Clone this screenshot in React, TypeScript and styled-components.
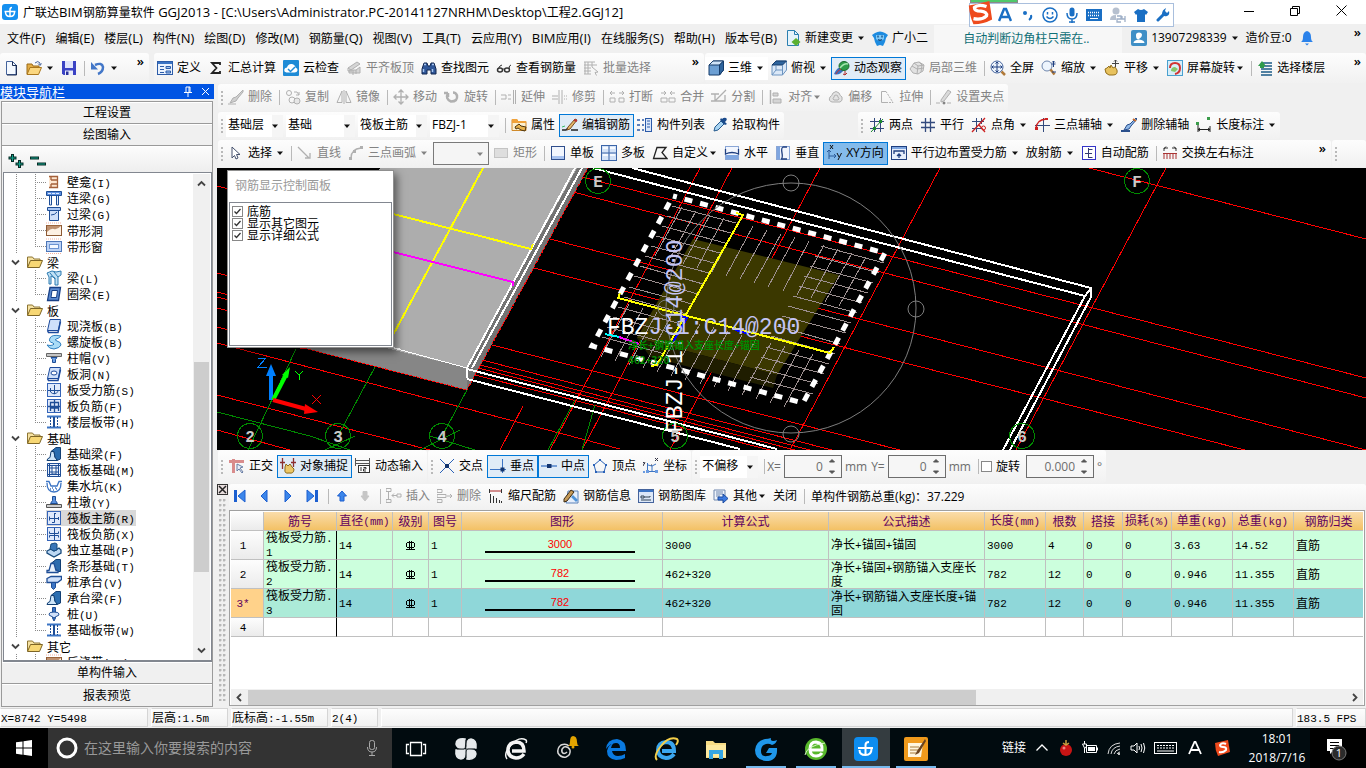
import React, { ReactNode } from "react";
import styled, { createGlobalStyle, css } from "styled-components";

const UI = `"Open Sans", "Noto Sans CJK SC", sans-serif`;
const SONG = `"Noto Sans CJK SC", sans-serif`;

const Global = createGlobalStyle`
  * { box-sizing: border-box; }
  html, body { margin: 0; padding: 0; }
  body { background: #f0f0f0; color: #000; font: 12px/16px ${UI}; overflow: hidden; }
  button, input, select { font: inherit; color: inherit; margin: 0; }
  svg { display: block; flex: none; }
`;

/* ---------- icons ---------- */

const g = "#b0b0b0";
const n = "#1f4e96";

const slab = (
  <>
    <path d="M4 1.500h10.500l-2 11H1.500z" fill="#cfe0fa" stroke="#1c4a9c" />
    <path d="M1.500 12.500l1 2H12l2.500-11" fill="none" stroke="#1c4a9c" strokeWidth="1.500" />
  </>
);
const frame = <rect x="1.500" y="1.500" width="13" height="13" fill="#dfe9fb" stroke="#3564b8" />;
const beam = (
  <>
    <path d="M1 14.500q0-2 3-3l1-6h3l1 6q2 1 2 3z" fill="#cfe6fa" stroke="#123f73" />
    <path d="M5 5.500L10 1.500h4.500V13L11 14.500q0-2-2-3l-1-6z" fill="#2a6db0" stroke="#123f73" />
  </>
);

const icons: Record<string, ReactNode> = {
  logo: (
    <>
      <rect width="16" height="16" rx="3" fill="#1590f0" />
      <path d="M2.500 7.500h11M8 12V5.500Q8 3.500 10 3.500M12.500 8q0 4.500-4.500 4.500T3.500 8" fill="none" stroke="#fff" strokeWidth="1.500" />
    </>
  ),
  new: (
    <>
      <path d="M3.500 1.500h6l3.500 3.500v9.500H3.500z" fill="#f4f9ff" stroke="#44639c" />
      <path d="M9.500 1.500v4H13M13.500 5v10H4" fill="none" stroke="#1d2e55" />
    </>
  ),
  open: (
    <>
      <path d="M1 14V4h5l1 2h6v2" fill="#e3ad45" stroke="#9b6a16" />
      <path d="M1 14.500L4 7.500h11.500l-3 7z" fill="#fbd780" stroke="#a9761d" />
      <path d="M9 3q3-3 5 0v2m-2-1.500l2 2 1.500-2" fill="none" stroke="#44639c" />
    </>
  ),
  save: (
    <>
      <path d="M1 1h14v14H2.500L1 13.500z" fill="#3a42c4" />
      <path d="M4 1h8v7H4z" fill="#dfe3fb" />
      <path d="M4 10.500h8V15H4z" fill="#e9ecfa" />
      <path d="M5 11.500h2.500V15H5z" fill="#26309b" />
    </>
  ),
  undo: (
    <>
      <path d="M5 5Q12 2 13 7q0 5-5 7" fill="none" stroke="#4377c8" strokeWidth="2.500" />
      <path d="M1 2v7.500h7z" fill="#4377c8" />
    </>
  ),
  define: (
    <>
      <rect x="0.500" y="1.500" width="15" height="13" fill="#eaf2fd" stroke="#2c5ca8" />
      <path d="M1 2h14v2H1z" fill="#3b74c4" />
      <path d="M3 6.500h4M3 9.500h4M3 12.500h4M9 6.500h4.500v2H9zM9 11h4.500v2H9z" fill="#9dc0ee" stroke="#2c5ca8" />
    </>
  ),
  sum: <path d="M12 5V3H4l4.500 5L4 13h8v-2" fill="none" stroke="#222" strokeWidth="1.800" />,
  cloud: (
    <>
      <rect width="16" height="16" rx="1" fill="#1e8bd6" />
      <path d="M3.500 12.500Q0.500 12 1.500 9 2 7.500 4 7.500 5 3.500 9 4q3 .500 3.500 3.500 2.500 1 2 3-.500 2-3 2z" fill="#fff" />
      <path d="M5 9l2.500 2.500L12 7" stroke="#1e8bd6" strokeWidth="1.500" fill="none" />
    </>
  ),
  align: (
    <>
      <path d="M2 8l9-6 3 2-9 6zM3 13h11V7l-4 3H3z" fill="#d5d5d5" stroke={g} />
      <path d="M2 8v3h4M7 10v5M10 10v4" stroke={g} fill="none" />
    </>
  ),
  find: (
    <>
      <path d="M1 9l2-6h3l1 3h2l1-3h3l2 6v5h-5v-4H6v4H1z" fill="#2f5698" stroke="#12264f" />
      <path d="M3 4.500h2M11 4.500h2M2.500 9v3M11.500 9v3" stroke="#a9c8f2" strokeWidth="1.500" />
    </>
  ),
  glasses: (
    <>
      <ellipse cx="4" cy="10" rx="2.500" ry="2" fill="none" stroke="#333" strokeWidth="1.500" />
      <ellipse cx="11" cy="10" rx="2.500" ry="2" fill="none" stroke="#333" strokeWidth="1.500" />
      <path d="M2 9q2-4 4-4M6.500 9.500q1-1 2 0M13 9q0-4 2-4" fill="none" stroke="#333" />
    </>
  ),
  batch: <path d="M1 2h11M1 5h13M1 8h7M1 11h7M1 14h7M2 2v12M5 2v12M9 2v5M9 7l6 5-3 .500 1.500 3" fill="none" stroke={g} />,
  cube: (
    <>
      <path d="M1 5l4-4h10.500v9l-4 5H1z" fill="#6c9fd3" stroke="#173d6b" />
      <path d="M1 5l4-4h10.500l-4 4z" fill="#cfe3f7" stroke="#173d6b" />
      <path d="M11.500 5V15l4-5V1z" fill="#2e649d" stroke="#173d6b" />
    </>
  ),
  top: (
    <>
      <path d="M1 5l4-4h10.500v9l-4 5H1z" fill="#dbe8f7" stroke="#6c94c0" />
      <path d="M1 5l4-4h10.500l-4 4z" fill="#2e649d" stroke="#173d6b" />
      <path d="M11.500 5V15M5 5v5h6M5 10l-4 5" fill="none" stroke="#6c94c0" />
    </>
  ),
  orbit: (
    <>
      <path d="M0 14Q5 16 10 10L6 7Q2 9 0 14z" fill="#3a6fc0" />
      <ellipse cx="10" cy="6" rx="5" ry="4.500" fill="#2e9c4a" stroke="#1c6b30" />
      <path d="M6 8q4-5 8-4" stroke="#a5e6b0" fill="none" strokeWidth="1.500" />
      <path d="M2 14q1-3 5-5" stroke="#c23838" fill="none" />
      <path d="M11 11v4l-2-1m2 1l2-2" stroke="#b02a2a" fill="none" />
    </>
  ),
  local: (
    <>
      <path d="M1 9l4-6 5-1 5 3-1 6-5 3-5-1z" fill="#e2e2e2" stroke={g} />
      <path d="M5 3l4 3-1 8M9 6l6-1M3 6l5 3 7-1M10 2l3 3-1 7" fill="none" stroke={g} />
    </>
  ),
  full: (
    <>
      <circle cx="7" cy="7" r="6" fill="#eef5fd" stroke="#44639c" />
      <path d="M7 2v10M2 7h10M5.500 3.500L7 2l1.500 1.500M5.500 10.500L7 12l1.500-1.500M3.500 5.500L2 7l1.500 1.500M10.500 5.500L12 7l-1.500 1.500" stroke="#1f3f80" fill="none" />
      <path d="M11.500 11.500l3.500 3.500" stroke="#b07a3a" strokeWidth="2.500" />
    </>
  ),
  zoom: (
    <>
      <circle cx="6" cy="6" r="5" fill="#eef5fd" stroke="#6f87ae" />
      <path d="M9.500 9.500l4 5" stroke="#b07a3a" strokeWidth="2.500" />
      <path d="M12.500 1v6M11 2.500L12.500 1 14 2.500M10.500 4h4M11 12h4" stroke="#1f3f80" fill="none" />
    </>
  ),
  pan: (
    <>
      <path d="M3 8l2-2 1 2 1-3 2 3 2-1 2 3q1 5-4 5H5Q1 14 1 9z" fill="#e8c25e" stroke="#94701d" />
      <path d="M11.500 0v7M8 3.500h7M10 1.500L11.500 0 13 1.500" stroke="#444" fill="none" />
    </>
  ),
  spin: (
    <>
      <rect x="0.500" y="0.500" width="15" height="15" fill="#d7eef9" stroke="#49a0cf" />
      <path d="M3 8q0-5 5-5t5 5-5 6" fill="none" stroke="#d23333" strokeWidth="2" />
      <path d="M4 11q0-4 4-4l3 2-3 3z" fill="#86c66a" />
    </>
  ),
  floors: (
    <>
      <path d="M6 3h9M6 6h9M4 9h11M4 12h11M4 15h11" stroke="#1b5b86" strokeWidth="1.500" />
      <path d="M1 6l4-5 4 5H7v2H3V6z" fill="#2f9b4b" />
    </>
  ),
  brush: (
    <>
      <path d="M15 1L8 8l-3 1-3 5 6-2 2-3 5-6z" fill="#cfcfcf" stroke={g} />
      <path d="M0 15h8" stroke={g} />
    </>
  ),
  copy: (
    <>
      <circle cx="4" cy="4" r="2.500" fill="none" stroke={g} />
      <circle cx="7" cy="11" r="3" fill="none" stroke={g} />
      <circle cx="12" cy="12" r="3" fill="#e6e6e6" stroke={g} />
      <path d="M9 3h3l2 3m0-3v3h-3" fill="none" stroke={g} />
    </>
  ),
  mirror: <path d="M6 2v11.500H1zM10 2v11.500h5zM8 1v14" fill="none" stroke={g} />,
  move: <path d="M8 1v14M1 8h14M5.500 3.500L8 1l2.500 2.500M5.500 12.500L8 15l2.500-2.500M3.500 5.500L1 8l2.500 2.500M12.500 5.500L15 8l-2.500 2.500" fill="none" stroke={g} strokeWidth="1.300" />,
  rotate: <path d="M4 4q-3 6 3 8.500 7 0 6-6-1-3-4-3M4 4v4M4 4H0" fill="none" stroke={g} strokeWidth="2.500" />,
  extend: <path d="M0 6h5M0 10h5M5 6v4M7 6h3M7 10h3M12.500 1v14M14.500 1v14" fill="none" stroke={g} />,
  trim: <path d="M0 7h6M0 10h6M7 1v14M10 1v14M12 7h1M14 7h1M12 10h1M14 10h1" fill="none" stroke={g} />,
  split: <path d="M1 4h5M3 2L1 4l2 2M15 4h-5M13 2l2 2-2 2M1 9h5v4H1zM10 9h5v4h-5z" fill="none" stroke={g} />,
  join: <path d="M6 4H1M4 2l2 2-2 2M10 4h5M12 2l-2 2 2 2M1 9h6v4H1zM9 9h6v4H9z" fill="none" stroke={g} />,
  cut: <path d="M0 5h8M0 12h14V6M15 1L7 9l-3 3M4 5v7" fill="none" stroke={g} strokeWidth="1.300" />,
  justify: (
    <>
      <path d="M2.500 1v14" stroke={g} strokeWidth="1.500" />
      <path d="M5 4h5v3H5zM5 10h8v4H5z" fill="#d5d5d5" stroke={g} />
    </>
  ),
  offset: (
    <>
      <path d="M4 13Q0 12 2 8q2-1 3-4 3-3 6 0 1 3 3 4 1 4-2 5z" fill="#e3e3e3" stroke={g} />
      <path d="M6 11q-2-1 0-3 0-2 2-2t2 2q2 2 0 3z" fill="none" stroke={g} />
    </>
  ),
  stretch: (
    <>
      <path d="M7 2.500H2.500v11H7" fill="none" stroke={g} />
      <path d="M7 2.500l7 11H7" fill="none" stroke={g} strokeDasharray="2 1" />
    </>
  ),
  grip: (
    <>
      <path d="M5 11L12 1l3 2-7 9-3 1z" fill="#dadada" stroke={g} />
      <path d="M0 14h4M11 14h4M7 13h2v2H7z" stroke={g} />
    </>
  ),
  prop: (
    <>
      <path d="M1 13.500v-11h5l1 2h8v9z" fill="#fdf0cf" stroke="#d08a2a" />
      <path d="M1 2h5l1 2h8v2H1z" fill="#f0a23a" />
      <path d="M4 10l4-3 2 2 5 1-1 4-4-1-3-2-2 1z" fill="#e9b34d" stroke="#4b330c" />
    </>
  ),
  edit: (
    <>
      <path d="M0 13h4l2-2M9 13h7" stroke="#222" fill="none" strokeWidth="1.500" />
      <path d="M6 10l7-8 2 1-7 9-3 1z" fill="#e3b76a" stroke="#7b4c1e" />
      <path d="M12 3l3 1" stroke="#b83434" strokeWidth="2" />
      <path d="M0 10l3-1" stroke="#3b6" />
    </>
  ),
  list: (
    <>
      <path d="M0 3h3M0 8h3M0 13h3M5 3h2M5 8h2M5 13h2" stroke="#2b5aa8" strokeWidth="1.500" />
      <rect x="8.500" y="1.500" width="6" height="13" fill="#dbe7fa" stroke="#2b5aa8" />
      <path d="M10 4h3M10 7h3M10 10h3" stroke="#2b5aa8" />
    </>
  ),
  pick: (
    <>
      <path d="M2 14l1-4 6-6 3 3-6 6z" fill="#a8d4f2" stroke="#255a8e" />
      <path d="M8 3l5 5 2-1-2-2q3-3 1-4t-4 1L9 1z" fill="#1b4b8c" />
    </>
  ),
  twoPoint: (
    <>
      <path d="M5.500 1v14M11.500 1v14M1 4.500h14M1 11.500h14" stroke="#334a7d" />
      <path d="M2 15L14 2" stroke="#1d8a2f" />
      <path d="M4 10h3v3H4zM10 3h3v3h-3z" fill="#1d8a2f" />
    </>
  ),
  parallel: <path d="M5.500 1v14M10.500 1v14M1 5.500h14M1 10.500h14" stroke="#334a7d" strokeWidth="1.300" />,
  pointAngle: (
    <>
      <path d="M5.500 1v14M1 4.500h12M1 11.500h10M10.500 1v6" stroke="#334a7d" />
      <path d="M1 15L14 1M8 8l6 7" stroke="#c22" strokeWidth="1.300" />
      <circle cx="12.500" cy="11" r="2" fill="none" stroke="#c22" />
    </>
  ),
  arcAxis: (
    <>
      <path d="M9.500 1v14M1 8.500h15" stroke="#334a7d" />
      <path d="M2 12q0-9 10-10" stroke="#c22" fill="none" strokeWidth="1.300" />
      <path d="M1 10h3v3H1zM11 1h3v2h-3z" fill="#c22" />
    </>
  ),
  delAxis: (
    <>
      <path d="M15 1L9 7l-3 1-3 5 5-1 2-3 6-7z" fill="#8fb8e8" stroke="#2a4f8c" />
      <path d="M12 2l3 2" stroke="#c86a2a" strokeWidth="2" />
      <path d="M0 14h9" stroke="#2a4f8c" strokeWidth="2" />
    </>
  ),
  dim: (
    <>
      <path d="M2 7v8M14 9v6M2 12.500h12M4 11l-2 1.500L4 14M12 11l2 1.500-2 1.500" fill="none" stroke="#222" />
      <path d="M0 5h3v3H0zM11 0h3v3h-3z" fill="#3a9c4a" />
    </>
  ),
  cursor: <path d="M4 2v11l2.500-2.500L8 14l2-1-1.500-3.500H12z" fill="#fff" stroke="#44506c" />,
  line: <path d="M1 2l11 11M13 8v5H8" fill="none" stroke={g} strokeWidth="1.300" />,
  arc: (
    <>
      <path d="M3 13Q3 4 13 3" fill="none" stroke={g} strokeWidth="1.300" />
      <path d="M1 12h3v3H1zM5 5h3v3H5zM12 1h3v3h-3z" fill={g} />
    </>
  ),
  rect: <rect x="1.500" y="3.500" width="13" height="9" fill="#dedede" stroke="#c4c4c4" />,
  board: (
    <>
      <rect x="1.500" y="1.500" width="13" height="13" fill="#f2f6fe" stroke="#2f4e8d" />
      <path d="M2 11h12v3H2z" fill="#a9c3f0" />
    </>
  ),
  boards: (
    <>
      <rect x="0.500" y="0.500" width="15" height="15" fill="#d4e3f8" stroke="#3b65a8" />
      <path d="M8 1v14M1 8h14" stroke="#3b65a8" />
      <path d="M2 2h5v2H2zM9 2h5v2H9zM2 9h5v2H2zM9 9h5v2H9z" fill="#f6faff" />
    </>
  ),
  custom: <path d="M5 2.500h9l-4 5 5 6H1.500z" fill="none" stroke="#222" strokeWidth="1.300" />,
  horiz: (
    <>
      <rect x="1.500" y="1.500" width="13" height="13" fill="#f2f6fe" stroke="#8aa6d6" />
      <path d="M2 10h12v4H2z" fill="#7fa6e0" />
      <path d="M1.500 4v5q6.500-3 13 0V4" fill="none" stroke="#1f3f80" strokeWidth="1.300" />
    </>
  ),
  vert: (
    <>
      <rect x="1.500" y="1.500" width="13" height="13" fill="#f2f6fe" stroke="#8aa6d6" />
      <path d="M2 2h3v12H2z" fill="#7fa6e0" />
      <path d="M12 2H8q-2 1-1 6t-1 6h6" fill="none" stroke="#1f3f80" strokeWidth="1.300" />
    </>
  ),
  xy: (
    <>
      <path d="M3 5v6h7M1 7l2-2 2 2M8 9l2 2-2 2M3 11v3" fill="none" stroke="#2a5a98" />
      <path d="M4 0l3 4M7 0L4 4M11 8l2 4M15.500 8L12 15" stroke="#111" />
    </>
  ),
  para: (
    <>
      <rect x="0.500" y="1.500" width="15" height="13" fill="#e6eefb" stroke="#1f3f80" />
      <path d="M1 2h14v2H1z" fill="#7fa6e0" />
      <path d="M3 9V6h10v3M8 13V9M6 11l2-2 2 2" fill="none" stroke="#1f3f80" strokeWidth="1.300" />
    </>
  ),
  auto: (
    <>
      <rect x="1.500" y="1.500" width="13" height="13" fill="#fff" stroke="#3434c8" />
      <path d="M7.500 3v10M7.500 4.500h4M4 8.500h7M7.500 12.500h4" fill="none" stroke="#333a70" />
    </>
  ),
  swap: (
    <>
      <path d="M2 6V3h4M10 3h4v3M4 1.500L2 4M12 1.500L14 4" fill="none" stroke="#333" />
      <path d="M2 14V9M5 14V9M8 14V9M11 14V9M14 14V9M1 8.500h14" stroke="#a33" />
    </>
  ),
  ortho: (
    <>
      <path d="M0 3.500h15M4.500 1v14" stroke="#d98c8c" strokeWidth="3" />
      <path d="M8 6v7l2-2 3 4 1-1-3-4 3-1z" fill="#e8eef8" stroke="#6a7ea4" />
    </>
  ),
  snap: (
    <>
      <path d="M2.500 0v11M13.500 0v9M0 4.500h5M11 4.500h5" stroke="#8a2f2f" strokeWidth="1.300" />
      <path d="M5 9l1-3 2 2 2-2 2 3 2 2q0 5-5 4-5 1-4-4z" fill="#ebc766" stroke="#8d6b1e" />
    </>
  ),
  dyn: (
    <>
      <path d="M0.500 2.500h14M0.500 5.500h14M0.500 0v8M14.500 0v8" stroke="#555" fill="none" />
      <rect x="3.500" y="7.500" width="11" height="7" fill="#fff" stroke="#333" />
      <path d="M6 9v4M8.500 9.500H11v1.500H8.500V13H11" stroke="#333" fill="none" />
    </>
  ),
  cross: (
    <>
      <path d="M1 1l14 14M15 1L1 15" stroke="#2a62b8" />
      <path d="M6 6h4v4H6z" fill="#12356f" />
    </>
  ),
  perp: (
    <>
      <path d="M0 11.500h16M12.500 1v14" stroke="#3b74c4" />
      <path d="M10.500 9.500h4v4h-4z" fill="#12356f" />
    </>
  ),
  mid: (
    <>
      <path d="M0 8h16" stroke="#3b74c4" strokeWidth="1.300" />
      <path d="M6 6h4.500v4H6z" fill="#12356f" />
    </>
  ),
  vertex: (
    <>
      <path d="M8 2l6 5-2 7H4L2 7z" fill="none" stroke="#2a62b8" />
      <path d="M7 1h2v2H7zM13 6h2v2h-2zM1 6h2v2H1zM3 13h2v2H3zM11 13h2v2h-2z" fill="#2a62b8" />
    </>
  ),
  coord: (
    <>
      <path d="M4.500 5v8.500H14M5 7l4 1v5M9 8l4-2" fill="none" stroke="#3b74c4" />
      <path d="M0 4l2 2M2 4L0 8M12 0l3 3M15 0l-3 3M4 13h1M8 7h1M13 13h1" fill="none" stroke="#334" />
      <path d="M0 13h2v2H0zM3 12h3v3H3zM12 12h3v3h-3z" fill="#6a9be0" />
    </>
  ),
  first: (
    <>
      <path d="M2 2h3v12H2z" fill="#1c5fd0" />
      <path d="M13 2v12L6 8z" fill="#3c86ea" stroke="#1c5fd0" />
    </>
  ),
  prev: <path d="M11 2v12L5 8z" fill="#3c86ea" stroke="#1c5fd0" />,
  next: <path d="M5 2v12l6-6z" fill="#3c86ea" stroke="#1c5fd0" />,
  last: (
    <>
      <path d="M11 2h3v12h-3z" fill="#1c5fd0" />
      <path d="M3 2v12l7-6z" fill="#3c86ea" stroke="#1c5fd0" />
    </>
  ),
  up: <path d="M8 3l4.500 5H10v5H6V8H3.500z" fill="#3c86ea" stroke="#1c5fd0" />,
  down: <path d="M8 13l4-5h-2V3.500H6V8H4z" fill="#c6c6c6" stroke="#c6c6c6" />,
  insert: <path d="M0 0.500h5v3H0zM0 11.500h5v3H0zM2.500 4v7M6 7.500h5M8 5.500l-2 2 2 2M11 6h4v3h-4z" fill="none" stroke={g} />,
  remove: <path d="M0 1.500h5v3H0zM0 11.500h5v3H0zM0 6.500h9v3H0zM10 8h5M13 6l2 2-2 2" fill="none" stroke={g} />,
  scale: (
    <>
      <path d="M2 3h11" stroke="#a22" />
      <path d="M1.500 1v4M13.500 1v4M2.500 6v9M5.500 8v7M8.500 10v5M11.500 12v3M13.500 13v2" stroke="#333" />
    </>
  ),
  info: (
    <>
      <path d="M5 3h10v12H3z" fill="#e5eefb" stroke="#5b82b8" />
      <path d="M8 9l5 5 2-2-5-5z" fill="#4f93d8" />
      <path d="M1 11l7-9 3 2-7 9-3 1z" fill="#c59a58" stroke="#3c2a12" />
    </>
  ),
  gallery: (
    <>
      <rect x="0.500" y="1.500" width="15" height="13" fill="#dbe7f8" stroke="#44639c" />
      <path d="M1 2h14v2H1z" fill="#3b74c4" />
      <path d="M3 8h3v2H3zM6 9h6v-1M3 12h10" fill="none" stroke="#345" />
    </>
  ),
  other: (
    <>
      <path d="M1 2h11v10H1z" fill="#eef3fb" stroke="#6f87ae" />
      <path d="M3 4h7M3 6h7M3 8h4" stroke="#6f87ae" />
      <path d="M5 9h5V6l5 4.500-5 4.500v-3H5z" fill="#3c7ae0" stroke="#1b4aa0" />
    </>
  ),
  change: (
    <>
      <path d="M2.500 0.500h7l4 4v11h-11z" fill="#e5f3fb" stroke="#2a7fb0" />
      <path d="M9.500 0.500v4h4" fill="none" stroke="#2a7fb0" />
      <path d="M11 8l4.500 4L11 16l-4.500-4z" fill="#5bb030" />
    </>
  ),
  robot: (
    <>
      <path d="M0 5l3-2q5-3 10 0l3 2-2 3-1 4-2 4-3-1-3 1-2-4-1-4z" fill="#1d8be0" />
      <path d="M4 5h8v4q-4 4-8 0z" fill="#7cc8f8" />
      <path d="M6 5.500v2M10 5.500v2M6 9.500q2 1.500 4 0" fill="none" stroke="#134a80" strokeWidth="1.300" />
    </>
  ),
  user: (
    <>
      <rect width="16" height="16" rx="2" fill="#3f8fc6" />
      <path d="M5 5q0-2.500 3-2.500T11 5t-3 4T5 5zM2.500 13q0-3 5.500-3.500 5.500.500 5.500 3.500z" fill="#fff" />
    </>
  ),
  bell: (
    <>
      <path d="M8 1q4 1 4 6 0 4 2 5H2q2-1 2-5 0-5 4-6z" fill="#2b82ea" />
      <path d="M6 13.500h4l-2 2z" fill="#2b82ea" />
    </>
  ),
  folder: (
    <>
      <path d="M0.500 13V3h5l1.500 2h6v3" fill="#f6e2a2" stroke="#8c7433" />
      <path d="M0.500 13.500l3-7h12l-3 7z" fill="#f7d774" stroke="#7d6526" />
    </>
  ),
  t_niche: (
    <>
      <path d="M3 2.500h8.500v11H3M5 6h6M5 10h6M5 2.500V6M5 10v3.500" fill="#fde6d0" stroke="#a4603a" strokeWidth="1.300" />
    </>
  ),
  t_link: (
    <>
      <path d="M0.500 1.500h15v4h-15z" fill="#5b8fe0" stroke={n} />
      <path d="M3.500 6v9h2V6M10.500 6v9h2V6" fill="#e6effd" stroke={n} />
      <path d="M2 3.500h12" stroke="#dfeafe" strokeDasharray="3 1" />
    </>
  ),
  t_lintel: (
    <>
      <path d="M1.500 1.500h13v3h-13z" fill="#a9c6f4" stroke={n} />
      <path d="M3.500 5v9.500h9V5" fill="#cfe0fa" stroke={n} />
      <path d="M5 9q4 0 6-3" fill="none" stroke={n} />
    </>
  ),
  t_hole: (
    <>
      <rect x="0.500" y="3.500" width="15" height="10" fill="#fdf1e4" stroke="#8d5a34" />
      <path d="M1 10q4-4 7-3t7-3v-1H1z" fill="#a2683e" opacity="0.700" />
      <path d="M0 1h16" stroke="#f2b0a0" strokeDasharray="1 1" />
    </>
  ),
  t_window: (
    <>
      <rect x="0.500" y="3.500" width="15" height="10" fill="#bcd3f6" stroke="#4d77b8" />
      <rect x="3.500" y="6.500" width="9" height="4" fill="#f4f9ff" stroke="#6d95d2" />
      <path d="M0 1h16M0 15.500h16" stroke="#f2b0a0" strokeDasharray="1 1" />
    </>
  ),
  t_beam: (
    <>
      <path d="M1 3l5-2 4 1 5-1v4l-3 2v8H9V8L5 6v8H3V7z" fill="#bfe0f5" stroke="#2c7ab0" />
      <path d="M4 3l5 6M8 2l4 5" stroke="#2c7ab0" />
    </>
  ),
  t_ring: (
    <>
      <path d="M4 1.500h10.500l-2 13H1.500z" fill="#5b8ad0" stroke="#173f86" strokeWidth="1.300" />
      <path d="M6 4.500h5.500l-1 7H5z" fill="#fff" stroke="#173f86" />
    </>
  ),
  t_slab: slab,
  t_spiral: <path d="M15 2Q6 0 4 4t3 5q2 1 0 2-3 1-6 0 2 4 7 4 6-1 7-4 0-3-4-4-3-1-1-2 2 0 5-3z" fill="#a9dcf7" stroke="#2f7fc0" />,
  t_cap: (
    <>
      <path d="M0.500 3.500h15v3h-15z" fill="#c4c4c4" stroke="#666" />
      <path d="M5 7.500h6l-1.500 2v3h-3v-3z" fill="#6ea2e6" stroke={n} />
    </>
  ),
  t_slabhole: (
    <>
      {slab}
      <ellipse cx="8" cy="7" rx="3" ry="2" fill="#fff" stroke="#1c4a9c" />
    </>
  ),
  t_force: (
    <>
      {frame}
      <path d="M2 8.500h12M8.500 3v9M4.500 6v4q4 4 8-1" fill="none" stroke={n} />
    </>
  ),
  t_neg: (
    <>
      {frame}
      <path d="M8.500 2v12M4.500 8V4.500h8V8M2 8.500h12M4.500 13v-3h8v3" fill="none" stroke={n} strokeWidth="1.300" />
    </>
  ),
  t_strip: (
    <>
      <path d="M1 2.500h14M1 13.500h14" stroke="#3b74c4" strokeWidth="2" />
      <path d="M4.500 3v10M11.500 3v10" stroke={n} strokeDasharray="2 1" />
      <path d="M8 3v10" stroke={n} strokeWidth="2" />
    </>
  ),
  t_found: beam,
  t_raft: <path d="M1.500 1.500h13v13h-13zM3.500 1v14M12.500 1v14M1 3.500h14M1 12.500h14M6 4v8h4V4M4 6h8M4 10h8" fill="#eaf1fd" stroke={n} />,
  t_pit: <path d="M0 3.500h3l2 4.500h6l2-4.500h3M1 5q0 9 7 9t7-9M4 11h1M7 12h1M10 11h1M6 10h1M9 10h1" fill="none" stroke="#3b74c4" strokeWidth="1.300" />,
  t_pier: (
    <>
      <path d="M4.500 9.500l2-3v-4h3v4l2 3z" fill="#5b93e0" stroke={n} />
      <path d="M0.500 10.500h15v3h-15z" fill="#cfcfcf" stroke="#555" />
    </>
  ),
  t_main: (
    <>
      {frame}
      <path d="M3.500 8.500h9M3.500 6.500v4M12.500 7v3M8 3.500h2M8.500 3.500v9H6" fill="none" stroke={n} />
    </>
  ),
  t_rneg: (
    <>
      {frame}
      <path d="M8.500 2v12M3.500 5.500v2h9v-2M3.500 11.500v-2h9v2" fill="none" stroke={n} />
    </>
  ),
  t_indep: (
    <>
      <path d="M1 9l4-2 3 2 5-3 2 2v3l-7 4-7-4z" fill="#bcd8f4" stroke="#174a7c" strokeWidth="1.300" />
      <path d="M4 7l1-5 4-1 2 1v6L8 9z" fill="#3a76b8" stroke="#174a7c" />
    </>
  ),
  t_stripf: (
    <>
      <path d="M5 5.500l5-4h4.500v12h-3z" fill="#2d6cae" stroke="#123f73" />
      <path d="M1 14.500v-2h2l2-7h3l2 7h2v2z" fill="#e8f1fc" stroke={n} strokeWidth="1.300" />
    </>
  ),
  t_pilecap: (
    <>
      <path d="M1 4.500l4-2h10.500v3l-4 3H1z" fill="#cfe0fa" stroke={n} strokeWidth="1.300" />
      <path d="M5.500 8.500h4v5l-2 2-2-2z" fill="#3b74c4" stroke={n} />
    </>
  ),
  t_pile: (
    <>
      <path d="M6.500 1.500h3v5h-3zM6.500 9v3l1.500 3 1.500-3V9" fill="#3b74c4" stroke={n} />
      <path d="M3 8q0-2 5-2t5 2-2 2l-3 2-3-2q-2 0-2-2z" fill="#cfe0fa" stroke={n} />
    </>
  ),
};

const Icon = ({ name, size = 16 }: { name: string; size?: number }) => (
  <svg width={size} height={size} viewBox="0 0 16 16" aria-hidden>
    {icons[name]}
  </svg>
);

const Caret = ({ color = "#111" }: { color?: string }) => (
  <svg width="8" height="8" viewBox="0 0 8 8" aria-hidden>
    <path d="M1 2.500h6L4 6z" fill={color} />
  </svg>
);

const More = styled.span`
  margin-left: auto;
  align-self: flex-start;
  padding: 2px 5px 0;
  font: 600 13px/12px ${UI};
`;

/* ---------- mixed-width text ---------- */

const Latin = styled.span`
  && { padding: 0; }
  font: 11px/12px "Liberation Mono", monospace;
`;

const WideLatin = styled.span`
  font-size: 13px;
`;

/* splits the half-width characters from the CJK ones and sets them in their own face */
const Mixed = ({ children, wide }: { children: string; wide?: boolean }) => (
  <>
    {children.split(/([\x20-\x7e]+)/).map((s, i) => {
      if (i % 2 === 0) return s;
      return wide ? <WideLatin key={i}>{s}</WideLatin> : <Latin key={i}>{s}</Latin>;
    })}
  </>
);

/* ---------- shared toolbar parts ---------- */

const Shell = styled.div`
  height: 100vh;
  display: flex;
  flex-direction: column;
  background: #f0f0f0;
`;

const BarRow = styled.div<{ $h?: number }>`
  display: flex;
  height: ${(p) => p.$h ?? 28}px;
  padding-bottom: 1px;
  flex: none;
`;

const Bar = styled.div<{ $w?: number; $grow?: boolean; $ml?: number }>`
  display: flex;
  align-items: center;
  flex: ${(p) => (p.$grow ? "1 1 0" : "none")};
  min-width: 0;
  ${(p) => p.$w && `width: ${p.$w}px;`}
  margin-left: ${(p) => p.$ml ?? 1}px;
  border-radius: 3px;
  background: linear-gradient(#fdfdfd, #f1f1f1);
  white-space: nowrap;
`;

const Grip = styled.span<{ $w?: number }>`
  flex: none;
  width: ${(p) => p.$w ?? 7}px;
  height: 16px;
  background: linear-gradient(#b9b9b9 0 2px, transparent 2px) 3px 1px / 2px 4px repeat-y;
`;

const Sep = styled.span`
  flex: none;
  width: 1px;
  height: 15px;
  margin: 0 2px 0 3px;
  background: #b9b9b9;
`;

const ToolBtn = styled.button<{ $on?: boolean; $deep?: boolean; $white?: boolean; $tight?: boolean; $nav?: boolean }>`
  display: flex;
  align-items: center;
  gap: 4px;
  flex: none;
  height: 23px;
  padding: 0 ${(p) => (p.$nav ? 4 : 3)}px 1px 2px;
  border: 1px solid transparent;
  background: ${(p) => (p.$white ? "#fff" : "transparent")};
  white-space: nowrap;
  &:disabled { color: #838383; }
  ${(p) => p.$on && css`border-color: #0078d7; background: #e0ecf7;`}
  ${(p) => p.$deep && css`background: #84bbeb;`}
  ${(p) => p.$tight && css`svg:last-child { margin-left: -3px; }`}
`;

type ToolDef = { i?: string; t?: string; off?: boolean; on?: boolean; deep?: boolean; white?: boolean; nav?: boolean; caret?: boolean | "tight"; sep?: boolean };

const Tools = ({ items }: { items: ToolDef[] }) => (
  <>
    {items.map((it, k) =>
      it.sep ? (
        <Sep key={k} />
      ) : (
        <ToolBtn key={k} type="button" disabled={it.off} $on={it.on} $deep={it.deep} $white={it.white} $nav={it.nav} $tight={it.caret === "tight"} aria-label={it.t ?? it.i}>
          {it.i && <Icon name={it.i} />}
          {it.t}
          {it.caret && <Caret color={it.off ? "#838383" : "#111"} />}
        </ToolBtn>
      )
    )}
  </>
);

const ComboBox = styled.label<{ $w: number }>`
  display: grid;
  grid-template-columns: 1fr 12px;
  align-items: center;
  flex: none;
  width: ${(p) => p.$w}px;
  height: 22px;
  margin-right: 3px;
  background: linear-gradient(#f5f5f5, #f5f5f5) right / 11px 100% no-repeat #fff;
  select {
    grid-area: 1 / 1 / 2 / 3;
    width: 100%;
    height: 22px;
    padding: 0 0 2px 2px;
    border: 0;
    appearance: none;
    background: transparent;
  }
  svg { grid-area: 1 / 2; pointer-events: none; }
`;

const Combo = ({ value, w, label }: { value: string; w: number; label: string }) => (
  <ComboBox $w={w}>
    <select aria-label={label} defaultValue={value}>
      <option>{value}</option>
    </select>
    <Caret />
  </ComboBox>
);

/* ---------- title and menu ---------- */

const TitleBar = styled.header`
  display: flex;
  align-items: center;
  height: 24px;
  flex: none;
  padding: 0 2px;
  gap: 5px;
  background: #fff;
  h1 { margin: 0; font: 12px/24px ${UI}; }
`;

const WinButtons = styled.div`
  margin-left: auto;
  display: flex;
  button { width: 46px; height: 24px; padding: 0 0 3px; border: 0; background: none; display: grid; place-items: center; }
`;

const ImeBar = styled.div`
  position: absolute;
  top: 3px;
  right: 192px;
  display: flex;
  align-items: center;
  gap: 8px;
  height: 24px;
  padding: 0 3px 0 28px;
  border: 1px solid #a9bfdd;
  background: #fff;
`;

const ImeLogo = styled.span`
  position: absolute;
  left: -4px;
  top: -4px;
`;

const ImeBubble = styled.span`
  position: absolute;
  top: 0;
  right: 348px;
  width: 48px;
  height: 3px;
  background: #4fc96b;
  border: 1px solid #8a8a8a;
  border-top: 0;
`;

const MenuBar = styled.nav`
  display: flex;
  align-items: center;
  height: 29px;
  flex: none;
  padding-left: 2px;
  white-space: nowrap;
`;

const MenuBtn = styled.button`
  height: 24px;
  flex: none;
  padding: 0 5px;
  border: 0;
  background: none;
`;

const Ticker = styled.a`
  flex: 0 1 188px;
  margin: 0 6px 0 2px;
  padding: 0 29px;
  line-height: 28px;
  color: #0f6f76;
  background: #f7f7f7;
  text-decoration: none;
`;

/* ---------- side panel ---------- */

const Body = styled.div`
  display: flex;
  flex: 1;
  min-height: 0;
`;

const Side = styled.aside`
  display: flex;
  flex-direction: column;
  flex: none;
  width: 214px;
  margin-right: 3px;
  font-family: ${SONG};
`;

const SideHead = styled.div`
  display: flex;
  align-items: center;
  height: 15px;
  flex: none;
  margin-bottom: 2px;
  padding-right: 4px;
  gap: 8px;
  color: #fff;
  background: #0054e3;
  font-size: 13px;
  line-height: 15px;
  span { margin-right: auto; }
  button { padding: 0; border: 0; background: none; }
`;

const Stack = styled.div`
  display: flex;
  flex-direction: column;
  flex: 1;
  min-height: 0;
  margin: 0 1px;
  border: 1px solid #9a9a9a;
`;

const StackBtn = styled.button`
  height: 22px;
  flex: none;
  padding: 0 0 2px;
  border: 0;
  border-top: 1px solid #fff;
  border-bottom: 1px solid #9a9a9a;
  background: #f0f0f0;
  &:last-child { border-bottom: 0; }
`;

const StackTools = styled.div`
  display: flex;
  align-items: center;
  gap: 6px;
  height: 26px;
  flex: none;
  padding: 3px 6px 0;
  border-top: 1px solid #fff;
  background: linear-gradient(#fcfcfc, #eee);
  button { padding: 0; border: 0; background: none; }
`;

const TreeBox = styled.div`
  display: flex;
  flex: 1;
  min-height: 0;
  margin: 0 0 0 1px;
  padding-top: 1px;
  border: 1px solid #828790;
  border-bottom-width: 2px;
  background: #fff;
`;

const Tree = styled.ul`
  flex: 1;
  margin: 0;
  padding: 0;
  list-style: none;
  overflow: hidden;
`;

const dots = "#8a8a8a";
const vdots = (x: number, h = "16px") => `repeating-linear-gradient(${dots} 0 1px, transparent 1px 2px) ${x}px 0 / 1px ${h} no-repeat`;
const hdots = (x: number, w: number) => `repeating-linear-gradient(90deg, ${dots} 0 1px, transparent 1px 2px) ${x}px 8px / ${w}px 1px no-repeat`;

const Leaf = styled.li<{ $last?: boolean }>`
  display: flex;
  align-items: center;
  height: 16px;
  padding-left: 42px;
  background: ${(p) => `${vdots(12)}, ${vdots(31, p.$last ? "8px" : "16px")}, ${hdots(31, 11)}`};
`;

const Branch = styled.li`
  display: flex;
  align-items: center;
  gap: 6px;
  height: 16px;
  padding-left: 6px;
  line-height: 16px;
  button { padding: 0; border: 0; background: none; }
`;

const TreeLabel = styled.a<{ $sel?: boolean; $branch?: boolean }>`
  display: flex;
  align-items: center;
  height: 16px;
  gap: ${(p) => (p.$branch ? 2 : 3)}px;
  padding-right: 1px;
  line-height: 15px;
  color: #000;
  text-decoration: none;
  background: ${(p) => (p.$sel ? "#d9d9d9" : "transparent")};
  span { padding-left: 2px; }
`;

const VScroll = styled.div`
  display: flex;
  flex-direction: column;
  align-items: center;
  width: 17px;
  margin-right: 1px;
  background: #f0f0f0;
  svg { margin: 4px 0; }
`;

const VGap = styled.div`flex: 170 1 0;`;
const VThumb = styled.div`
  flex: 212 1 0;
  width: 15px;
  background: #cdcdcd;
`;
const VRest = styled.div`flex: 70 1 0;`;

const Chevron = ({ dir }: { dir: "up" | "down" | "left" | "right" }) => (
  <svg width="11" height="11" viewBox="0 0 11 11" aria-hidden>
    <path
      d={{ up: "M2 7.500L5.500 4 9 7.500", down: "M2 3.500L5.500 7 9 3.500", left: "M7 2L3.500 5.500 7 9", right: "M4 2l3.500 3.500L4 9" }[dir]}
      fill="none"
      stroke="#444"
      strokeWidth="1.800"
    />
  </svg>
);

type Node = [string, string] | [string];
const tree: Node[] = [
  ["壁龛(I)", "t_niche"], ["连梁(G)", "t_link"], ["过梁(G)", "t_lintel"], ["带形洞", "t_hole"], ["带形窗", "t_window"],
  ["梁"], ["梁(L)", "t_beam"], ["圈梁(E)", "t_ring"],
  ["板"], ["现浇板(B)", "t_slab"], ["螺旋板(B)", "t_spiral"], ["柱帽(V)", "t_cap"], ["板洞(N)", "t_slabhole"], ["板受力筋(S)", "t_force"], ["板负筋(F)", "t_neg"], ["楼层板带(H)", "t_strip"],
  ["基础"], ["基础梁(F)", "t_found"], ["筏板基础(M)", "t_raft"], ["集水坑(K)", "t_pit"], ["柱墩(Y)", "t_pier"], ["筏板主筋(R)", "t_main"], ["筏板负筋(X)", "t_rneg"], ["独立基础(P)", "t_indep"], ["条形基础(T)", "t_stripf"], ["桩承台(V)", "t_pilecap"], ["承台梁(F)", "t_found"], ["桩(U)", "t_pile"], ["基础板带(W)", "t_strip"],
  ["其它"], ["后浇带(JD)", "t_hole"],
];

const SidePanel = () => (
  <Side>
    <SideHead>
      <span>模块导航栏</span>
      <button type="button" aria-label="固定">
        <svg width="10" height="11" viewBox="0 0 10 11"><path d="M3 1h4v5M3 1v5M6 1v5M1 6.500h8M5 7v4" stroke="#fff" fill="none" /></svg>
      </button>
      <button type="button" aria-label="关闭面板">
        <svg width="9" height="9" viewBox="0 0 9 9"><path d="M1 1l7 7M8 1L1 8" stroke="#fff" /></svg>
      </button>
    </SideHead>
    <Stack>
      <StackBtn type="button">工程设置</StackBtn>
      <StackBtn type="button">绘图输入</StackBtn>
      <StackTools>
        <button type="button" aria-label="全部展开">
          <svg width="16" height="16" viewBox="0 0 16 16"><path d="M4.500 1v8M0.500 5h8M11.500 7v8M7.500 11h8" stroke="#062b25" strokeWidth="3" /><path d="M4.500 2v6M1.500 5h6M11.500 8v6M8.500 11h6" stroke="#12a08a" /></svg>
        </button>
        <button type="button" aria-label="全部折叠">
          <svg width="16" height="16" viewBox="0 0 16 16"><path d="M0 5h9M7 11h9" stroke="#062b25" strokeWidth="3" /><path d="M1 5h7M8 11h7" stroke="#12a08a" /></svg>
        </button>
      </StackTools>
      <TreeBox>
        <Tree>
          {tree.map(([t, i], k) =>
            i ? (
              <Leaf key={k} $last={k + 1 < tree.length && tree[k + 1].length === 1}>
                <TreeLabel href="#" $sel={t === "筏板主筋(R)"}>
                  <Icon name={i} />
                  <span><Mixed>{t}</Mixed></span>
                </TreeLabel>
              </Leaf>
            ) : (
              <Branch key={k}>
                <button type="button" aria-label={`折叠 ${t}`}><Chevron dir="down" /></button>
                <TreeLabel href="#" $branch><Icon name="folder" /><span>{t}</span></TreeLabel>
              </Branch>
            )
          )}
        </Tree>
        <VScroll>
          <Chevron dir="up" />
          <VGap /><VThumb /><VRest />
          <Chevron dir="down" />
        </VScroll>
      </TreeBox>
      <StackBtn type="button">单构件输入</StackBtn>
      <StackBtn type="button">报表预览</StackBtn>
    </Stack>
  </Side>
);

/* ---------- model viewport ---------- */

const Viewport = styled.section`
  position: relative;
  flex: none;
  height: 282px;
  background: #000;
  overflow: hidden;
  > svg { width: 100%; height: 282px; }
`;

const Palette = styled.div`
  position: absolute;
  left: 10px;
  top: 2px;
  width: 167px;
  height: 178px;
  padding: 0 1px 1px;
  display: flex;
  flex-direction: column;
  border: 1px solid #8f8f8f;
  background: #fff;
  box-shadow: 3px 4px 8px rgba(0, 0, 0, 0.5);
  h2 { margin: 0 0 1px; padding-left: 6px; font: 12px/30px ${UI}; color: #999; }
`;

const PaletteList = styled.div`
  flex: 1;
  padding: 2px;
  border: 1px solid #828790;
  font-family: ${SONG};
  label { display: flex; align-items: center; gap: 4px; height: 12px; line-height: 12px; }
`;

const Tick = styled.input`
  appearance: none;
  flex: none;
  width: 11px;
  height: 11px;
  border: 1px solid #888;
  background: #fff;
`;

const TickWrap = styled.span`
  display: grid;
  > * { grid-area: 1 / 1; }
  svg { pointer-events: none; }
`;

const Check = ({ label }: { label: string }) => (
  <label>
    <TickWrap>
      <Tick type="checkbox" defaultChecked />
      <svg width="11" height="11" viewBox="0 0 11 11"><path d="M2.500 5.500l2 2 4-4.500" fill="none" stroke="#333" strokeWidth="1.300" /></svg>
    </TickWrap>
    {label}
  </label>
);

type P = [number, number];
const A: P = [673, 196], B: P = [885, 253], C: P = [803, 403], D: P = [592, 346];
const at = (u: number, v: number): P => {
  const x = A[0] * (1 - u) * (1 - v) + B[0] * u * (1 - v) + C[0] * u * v + D[0] * (1 - u) * v;
  const y = A[1] * (1 - u) * (1 - v) + B[1] * u * (1 - v) + C[1] * u * v + D[1] * (1 - u) * v;
  return [Math.round(x), Math.round(y)];
};
const seg = (a: P, b: P) => `M${a.join(" ")}L${b.join(" ")}`;
const mesh = Array.from({ length: 14 }, (_, i) => {
  const t = 0.06 + i * 0.067;
  return seg(at(t, 0.05), at(t, 0.38)) + seg(at(t, 0.7), at(t, 1.05)) + seg(at(0.02, t), at(0.32, t)) + seg(at(0.72, t), at(1.02, t));
}).join("");

const redLines = [
  "M582 177L1366 378", "M573 192L1366 398", "M550 239L1366 450", "M534 268L1245 450", "M1089 168L1366 239",
  "M492 345L900 450", "M482 360L832 450", "M480 365L810 450", "M478 368L795 450", "M475 375L770 450",
  "M217 186L304 209", "M217 273L304 296", "M217 292L304 315", "M217 297L304 320", "M217 308L304 331", "M217 327L304 349",
  "M217 343L620 449", "M217 395L430 450", "M217 430L290 450",
  "M700 168L550 450", "M732 168L582 450", "M820 168L670 450", "M940 168L790 450", "M523 406L500 450", "M1166 168L1016 450",
].join("");

const Bubble = ({ x, y, t }: { x: number; y: number; t: string }) => (
  <>
    <circle cx={x} cy={y} r="12.500" fill="none" stroke="#008a00" shapeRendering="crispEdges" />
    <text x={x} y={y + 6} textAnchor="middle" fill="#c8c8c8" fontSize="16" fontWeight="bold" fontFamily="Liberation Mono">{t}</text>
  </>
);

const Model = () => (
  <svg viewBox="217 168 1149 282" preserveAspectRatio="xMinYMin slice" role="img" aria-label="三维模型">
    <g shapeRendering="crispEdges">
      <path d={redLines} stroke="#f00" fill="none" />
      <path d="M380 168H577L467 368 300 327z" fill="#adadad" />
      <path d="M300 327L467 368V390L300 347z" fill="#868686" />
      <path d="M577 168H588L467 390V368z" fill="#747474" />
      <path d="M304 348L467 390 588 168" stroke="#f00" fill="none" strokeDasharray="3 1" />
      <path d="M296 349L248 450M375 367L338 436M467 390L442 436M217 412L310 436 350 450M325 450l30-14M420 450l40-20M430 436l45 14M575 400L548 450M595 405L582 450" stroke="#008a00" fill="none" />
      <path d="M400 349l-10-2 77 21" stroke="#fff" fill="none" />
    </g>
    <path d="M693 239L839 275 777 375 637 338z" fill="#3b3800" />
    <path d="M637 338L777 375 773 388 650 357z" fill="#1f1d00" />
    <path d={mesh} stroke="#9c8f8f" fill="none" shapeRendering="crispEdges" />
    <g fill="none" stroke="#fff" strokeWidth="2" shapeRendering="crispEdges">
      <path d="M575 168L467 368V378M582 168L472 368" />
      <path d="M467 369L777 449M467 379L740 449" />
      <path d="M632 168L1091 288V297L1010 450M593 168L1085 296 1003 450M1091 288l-6 8" />
    </g>
    <path d="M673 196L885 253 803 403 592 346z" fill="none" stroke="#fff" strokeWidth="5" strokeDasharray="8 8" strokeDashoffset="4" />
    <g fill="none" strokeWidth="2" shapeRendering="crispEdges">
      <path d="M393 214L531 249l2-5M483 168L393 335M736 213l7 2L657 365l-6 1M620 293l-2 5 212 55 4-6" stroke="#ff0" />
      <path d="M393 252L513 282v4" stroke="#f0f" />
      <path d="M679 315l8 3-14 24M735 330l14 4" stroke="#00f" />
      <path d="M605 334l14 3" stroke="#0ff" />
      <path d="M619 337l20 7" stroke="#f0f" />
    </g>
    <g fill="none" stroke="#7d7d7d">
      <circle cx="791" cy="308" r="125" />
      <circle cx="791" cy="183" r="8" />
      <circle cx="791" cy="434" r="8" />
      <circle cx="916" cy="309" r="8" />
      <circle cx="666" cy="308" r="8" />
    </g>
    <Bubble x={598} y={181} t="E" />
    <Bubble x={1137} y={181} t="F" />
    <Bubble x={250} y={436} t="2" />
    <Bubble x={338} y={436} t="3" />
    <Bubble x={442} y={436} t="4" />
    <Bubble x={675} y={436} t="5" />
    <Bubble x={1022} y={436} t="6" />
    <g fontFamily="Liberation Mono" fontSize="23" fill="#c4c4f4">
      <text x="607" y="334"><tspan fill="#fff">FBZ</tspan>J-1:C14@200</text>
      <text transform="translate(682 433) rotate(-90)"><tspan fill="#fff">FBZJ-1</tspan>:C14@200</text>
    </g>
    <g fontFamily="Noto Sans CJK SC" fontSize="10" fontWeight="bold" fill="#008a00">
      <text x="628" y="349">净长+钢筋锚入支座长度+锚固</text>
      <text x="628" y="364">462+320</text>
    </g>
    <g strokeWidth="4">
      <path d="M271 400V373" stroke="#0080ff" />
      <path d="M266 376l5-12 5 12z" fill="#0080ff" />
      <path d="M273 400L286 375" stroke="#0f0" />
      <path d="M282 375l8-8-2 11z" fill="#0f0" />
      <path d="M273 400L306 409" stroke="#f00" />
      <path d="M305 404l13 8-14 2z" fill="#f00" />
    </g>
    <g fill="none" strokeWidth="1" shapeRendering="crispEdges">
      <path d="M258 358h8l-8 9h9" stroke="#0080ff" />
      <path d="M295 371l4 4 4-4M299 375v5" stroke="#0f0" />
      <path d="M312 395l9 9M321 395l-9 9" stroke="#f00" />
    </g>
  </svg>
);

/* ---------- snap bar fields ---------- */

const Field = styled.label`
  display: flex;
  align-items: center;
  gap: 3px;
  padding-right: 4px;
  color: #6d6d6d;
`;

const SpinBox = styled.span<{ $w: number }>`
  display: grid;
  grid-template-columns: 1fr 14px;
  align-items: center;
  width: ${(p) => p.$w}px;
  height: 23px;
  border: 1px solid #6d6d6d;
  background: #f6f6f6;
  input { grid-area: 1 / 1; width: 100%; height: 21px; padding: 0 4px 0 0; border: 0; background: none; text-align: right; }
`;

const Spin = ({ w, value, label }: { w: number; value: string; label: string }) => (
  <SpinBox $w={w}>
    <input defaultValue={value} aria-label={label} />
    <svg width="10" height="19" viewBox="0 0 10 19"><path d="M2.500 5h5L5 2.500zM2.500 14h5L5 16.500z" fill="#555" stroke="#555" /></svg>
  </SpinBox>
);

/* ---------- rebar table ---------- */

const TablePane = styled.div`
  display: flex;
  flex: 1;
  min-height: 0;
`;

const Splitter = styled.div`
  display: flex;
  flex-direction: column;
  gap: 4px;
  width: 11px;
  flex: none;
  &::after {
    content: "";
    flex: 1;
    margin: 0 2px 6px;
    background: radial-gradient(circle at 1px 1px, #b8b8b8 1px, transparent 2px) 0 0 / 4px 5px;
  }
  button { padding: 0; border: 0; background: none; }
`;

const PaneCol = styled.div`
  display: flex;
  flex-direction: column;
  flex: 1;
  min-width: 0;
`;

const GridFrame = styled.div`
  display: flex;
  flex-direction: column;
  flex: 1;
  margin: 0 1px 1px;
  min-height: 0;
  padding: 1px 1px 0;
  border: 1px solid #a0a0a0;
  background: #fff;
  overflow: hidden;
`;

const Grid = styled.table`
  width: 100%;
  table-layout: fixed;
  border-collapse: separate;
  border-spacing: 0;
  font: 12px/12px ${SONG};
  th, td { padding: 0 0 0 2px; border-right: 1px solid #c0c0c0; border-bottom: 1px solid #c0c0c0; text-align: left; font-weight: normal; word-break: break-all; }
  th:last-child, td:last-child { border-right: 0; }
  thead th { height: 19px; padding: 0; text-align: center; white-space: nowrap; color: #60005f; background: linear-gradient(#fadcaa, #f3c165); }
  thead th:first-child, tbody th { text-align: center; padding: 0 8px 0 0; color: #000; background: linear-gradient(#fdfdfd, #ebebeb); }
  tbody td:nth-child(2) { border-right-color: #000; }
  tbody td:nth-child(4) { padding: 0; }
  tbody td:nth-child(6) { padding: 0 4px 0 0; }
`;

const Row = styled.tr<{ $kind: "data" | "current" | "empty" }>`
  height: ${(p) => (p.$kind === "empty" ? 19 : 29)}px;
  background: ${(p) => ({ data: "#ccffdd", current: "#8fd7d9", empty: "#fff" }[p.$kind])};
  ${(p) => p.$kind === "current" && css`
    && th { background: #ffd28a; color: #60005f; }
    td:nth-child(2) { background: #acebd8; }
  `}
`;

const Shape = styled.div`
  width: 150px;
  margin: 0 auto;
  padding-bottom: 1px;
  border-bottom: 2px solid #000;
  color: #f00;
  text-align: center;
  font: 11px/12px "Liberation Sans", sans-serif;
`;

const HScroll = styled.div`
  display: flex;
  align-items: center;
  height: 16px;
  margin-top: auto;
  background: #f0f0f0;
  svg { margin: 0 3px; }
`;
const HThumb = styled.div`flex: 729 1 0; height: 15px; background: #cdcdcd;`;
const HRest = styled.div`flex: 371 1 0;`;

const heads = ["", "筋号", "直径(mm)", "级别", "图号", "图形", "计算公式", "公式描述", "长度(mm)", "根数", "搭接", "损耗(%)", "单重(kg)", "总重(kg)", "钢筋归类"];
const widths = [33, 73, 56, 36, 33, 201, 166, 156, 61, 38, 39, 49, 61, 61];
const rows = [
  ["1", "筏板受力筋.1", "14", "Φ", "1", "3000", "3000", "净长+锚固+锚固", "3000", "4", "0", "0", "3.63", "14.52", "直筋"],
  ["2", "筏板受力筋.2", "14", "Φ", "1", "782", "462+320", "净长+锚固+钢筋锚入支座长度", "782", "12", "0", "0", "0.946", "11.355", "直筋"],
  ["3*", "筏板受力筋.3", "14", "Φ", "1", "782", "462+320", "净长+钢筋锚入支座长度+锚固", "782", "12", "0", "0", "0.946", "11.355", "直筋"],
  ["4", "", "", "", "", "", "", "", "", "", "", "", "", "", ""],
];

const GradeMark = styled.svg`margin: 0 auto;`;

const Cell = ({ col, text }: { col: number; text: string }) => {
  if (col === 5 && text) return <td><Shape>{text}</Shape></td>;
  if (col === 3 && text)
    return (
      <td>
        <GradeMark width="11" height="11" viewBox="0 0 11 11" aria-label={text}>
          <path d="M4.500 1v9M6.500 1v9M2 2.500h7M2 7.500h7M1.500 3v4M9.500 3v4M1 9.500h9" fill="none" stroke="#000" shapeRendering="crispEdges" />
        </GradeMark>
      </td>
    );
  return <td><Mixed>{text}</Mixed></td>;
};

/* ---------- status and task bars ---------- */

const Status = styled.footer`
  display: flex;
  gap: 3px;
  height: 21px;
  flex: none;
  padding: 1px 0;
  background: #f0f0f0;
`;

const StatusCell = styled.span<{ $w?: number }>`
  flex: ${(p) => (p.$w ? `0 0 ${p.$w}px` : "1")};
  border: 1px solid #d5d5d5;
  border-left-color: #fff;
  background: linear-gradient(#fdfdfd, #f1f1f1);
  font: 12px/16px ${SONG};
  white-space: nowrap;
`;

const TaskBar = styled.footer`
  display: flex;
  align-items: stretch;
  height: 40px;
  flex: none;
  background: #010b0f;
  color: #fff;
  white-space: nowrap;
`;

const Start = styled.button`
  width: 48px;
  border: 0;
  padding: 0;
  background: #000;
  display: grid;
  place-items: center;
`;

const Search = styled.label`
  display: flex;
  align-items: center;
  gap: 6px;
  width: 344px;
  padding: 0 12px 0 8px;
  background: #333;
  input { flex: 1; min-width: 0; border: 0; padding: 0; background: none; outline: 0; color: #999; font-size: 14px; }
  input::placeholder { color: #999; opacity: 1; }
`;

const TaskBtn = styled.button<{ $run?: boolean; $active?: boolean }>`
  display: grid;
  place-items: center;
  width: 48px;
  margin-right: 2px;
  padding: 1px 0 0;
  border: 0;
  background: ${(p) => (p.$active ? "#343c40" : "none")};
  ${(p) => p.$run && css`
    background-image: linear-gradient(#76b9ed, #76b9ed);
    background-repeat: no-repeat;
    background-position: bottom;
    background-size: ${p.$active ? "100%" : "40px"} 2px;
  `}
`;

const Tray = styled.div`
  display: flex;
  align-items: center;
  gap: 8px;
  margin-left: auto;
`;

const Clock = styled.time`
  width: 66px;
  margin-left: 4px;
  text-align: center;
  line-height: 19px;
`;

const Action = styled.button`
  width: 56px;
  height: 40px;
  padding: 0 6px 0 0;
  border: 0;
  background: #000;
  display: grid;
  place-items: center;
`;

const TaskArt = ({ children }: { children: ReactNode }) => (
  <svg width="26" height="26" viewBox="0 0 26 26">{children}</svg>
);

const taskIcons: { label: string; run?: boolean; active?: boolean; art: ReactNode }[] = [
  { label: "任务视图", art: <path d="M7.500 6.500h11v13h-11zM6 8.500H3.500v9H6M20 8.500h2.500v9H20" fill="none" stroke="#fff" strokeWidth="1.300" /> },
  { label: "风车", art: <><path d="M12 3q-9-1-9 5 1 5 8 4zM14 12q-1-9 4-9 6 1 5 9zM14 14q9-1 9 4-1 6-9 5zM12 14q1 9-4 9-6-1-5-9z" fill="#e6eaec" stroke="#e6eaec" strokeWidth="1.500" /><path d="M13 4v6q0 2-2 3H4M22 13h-7q-2 0-2 3v6" fill="none" stroke="#222c30" /></> },
  { label: "浏览器", art: <><path d="M21 18q-3 4-8 4-8-1-8-8t8-8q8 0 8 9H9" fill="none" stroke="#f4f4f4" strokeWidth="3.500" /><path d="M4 23q-4-5 4-14T23 4q1 1 0 3" fill="none" stroke="#f4f4f4" strokeWidth="1.500" /></> },
  { label: "提醒", art: <><path d="M16 10q-3-3-8-1-4 3-3 8 3 5 8 4 5-2 4-7-2-4-6-3-3 2-2 5 2 3 5 0" fill="none" stroke="#d8d8d8" strokeWidth="1.500" /><path d="M20 0q4 0 4 6 0 3 2 4H15q2-1 2-4 0-6 3-6z" fill="#e2a400" /><circle cx="20" cy="11" r="1.500" fill="#e2a400" /></> },
  { label: "Edge", art: <path d="M3 13Q4 3 14 3q9 1 9 12H9q1 5 6 5 4 0 7-2v4q-4 2-9 2-9-1-9-9 1-6 7-8-3 2-3 5h9q0-5-4-5-6 0-10 6z" fill="#0a7ae0" /> },
  { label: "IE", art: <><path d="M21 18q-3 4-8 4-8-1-8-8t8-8q8 0 8 9H9" fill="none" stroke="#3aa6ee" strokeWidth="4" /><path d="M4 24q-4-4 4-14T24 3q2 2-1 6" fill="none" stroke="#f4cf4a" strokeWidth="2" /></> },
  { label: "资源管理器", art: <><path d="M3 5h7l2 2h11v15H3z" fill="#f7dc85" /><path d="M3 9h20v12H3z" fill="#fde99f" /><path d="M6 14h14v9h-4v-5h-6v5H6z" fill="#35a5e4" /></> },
  { label: "广联达 G", run: true, art: <path d="M18 2q-1 3 2 3 2 0 4-1-1 4-5 5-3-2-6-1-5 1-5 7t6 5q4 0 5-3l-6 0 3-5h8q1 13-11 13Q2 24 2 14 3 5 12 3q3 0 6-1z" fill="#1f97ea" /> },
  { label: "360", run: true, art: <><circle cx="13" cy="13" r="11" fill="#58b82c" /><path d="M19 17q-2 3-6 3-6 0-6-7t6-7q7 1 6 8H8" fill="none" stroke="#fff" strokeWidth="3" /><path d="M2 19q1-9 20-12" stroke="#d9f5c8" fill="none" /></> },
  { label: "GGJ2013", run: true, active: true, art: <><rect x="1" y="1" width="24" height="24" rx="4" fill="#0d8df0" /><path d="M5 12h15M12.500 19V9q0-3 3.500-3M18.500 13q0 6-6 6t-6-5" fill="none" stroke="#fff" strokeWidth="2" /></> },
  { label: "记事", run: true, art: <><rect x="1" y="1" width="24" height="24" rx="2" fill="#f09a1c" /><path d="M5 7h15l-2 14H5z" fill="#fff6df" /><path d="M7 11h9M7 14h8M7 17h6" stroke="#a87c3a" /><path d="M22 3l-8 12-2 4 4-2 7-12z" fill="#6b4420" /></> },
];

const edit: ToolDef[] = [
  { i: "brush", t: "删除", off: true }, { sep: true }, { i: "copy", t: "复制", off: true }, { i: "mirror", t: "镜像", off: true }, { sep: true },
  { i: "move", t: "移动", off: true }, { i: "rotate", t: "旋转", off: true }, { sep: true }, { i: "extend", t: "延伸", off: true }, { i: "trim", t: "修剪", off: true }, { sep: true },
  { i: "split", t: "打断", off: true }, { i: "join", t: "合并", off: true }, { i: "cut", t: "分割", off: true }, { sep: true },
  { i: "justify", t: "对齐", off: true, caret: "tight" }, { i: "offset", t: "偏移", off: true }, { i: "stretch", t: "拉伸", off: true }, { sep: true }, { i: "grip", t: "设置夹点", off: true },
];

const menus = ["文件(F)", "编辑(E)", "楼层(L)", "构件(N)", "绘图(D)", "修改(M)", "钢筋量(Q)", "视图(V)", "工具(T)", "云应用(Y)", "BIM应用(I)", "在线服务(S)", "帮助(H)", "版本号(B)"];

const DrawBox = styled.label`
  display: grid;
  grid-template-columns: 1fr 12px;
  align-items: center;
  flex: none;
  width: 56px;
  height: 23px;
  margin: 0 1px;
  border: 1px solid #7a7a7a;
  background: #f5f5f5;
  select { grid-area: 1 / 1 / 2 / 3; border: 0; height: 20px; background: none; appearance: none; }
  svg { grid-area: 1 / 2; pointer-events: none; }
`;

const Main = styled.main`
  display: flex;
  flex-direction: column;
  flex: 1;
  min-width: 0;
`;

const Total = styled.span`padding: 0 4px;`;

const ime = "#1a6fc4";

export default function App() {
  return (
    <Shell>
      <Global />
      <TitleBar>
        <Icon name="logo" />
        <h1><Mixed wide>{"广联达BIM钢筋算量软件 GGJ2013 - [C:\\Users\\Administrator.PC-20141127NRHM\\Desktop\\工程2.GGJ12]"}</Mixed></h1>
        <WinButtons>
          <button type="button" aria-label="最小化"><svg width="10" height="10"><path d="M0 5.500h10" stroke="#000" /></svg></button>
          <button type="button" aria-label="还原"><svg width="10" height="10"><path d="M0.500 2.500h7v7h-7zM2.500 2V0.500h7v7H8" fill="none" stroke="#000" /></svg></button>
          <button type="button" aria-label="关闭"><svg width="11" height="11"><path d="M0.500 0.500l10 10M10.500 0.500l-10 10" stroke="#000" /></svg></button>
        </WinButtons>
        <ImeBubble />
        <ImeBar>
          <ImeLogo>
            <svg width="28" height="28" viewBox="0 0 30 30">
              <path d="M3 6q11-2 22-5l3 20q-9 5-20 5-4-8-5-20z" fill="#ee4a1c" />
              <path d="M22 7q-9-3-13 1 0 4 7 4 7 1 6 5-5 5-14 3" fill="none" stroke="#fff" strokeWidth="3.500" />
            </svg>
          </ImeLogo>
          <svg width="14" height="16" viewBox="0 0 14 16"><path d="M1 14L6 2h2l5 12M3 10h8" fill="none" stroke={ime} strokeWidth="2.500" /></svg>
          <svg width="14" height="16" viewBox="0 0 14 16"><circle cx="5" cy="6" r="2" fill={ime} /><path d="M11 8q1 3-2 5" stroke={ime} strokeWidth="2" fill="none" /></svg>
          <svg width="16" height="16" viewBox="0 0 16 16"><circle cx="8" cy="8" r="7" fill="none" stroke={ime} strokeWidth="1.500" /><path d="M5.500 5v2.500M10.500 5v2.500M4.500 9.500q3.500 4 7 0" stroke={ime} strokeWidth="1.500" fill="none" /></svg>
          <svg width="12" height="16" viewBox="0 0 12 16"><rect x="3.500" y="0.500" width="5" height="9" rx="2.500" fill={ime} /><path d="M1 6q0 6 5 6t5-6M6 12v4M3 15h6" stroke={ime} strokeWidth="1.500" fill="none" /></svg>
          <svg width="16" height="14" viewBox="0 0 16 14"><rect width="16" height="12" y="1" fill={ime} /><path d="M2 4.500h12M2 7.500h12" stroke="#fff" strokeDasharray="1 1" strokeWidth="1.500" /><path d="M4 10.500h8" stroke="#fff" /></svg>
          <svg width="16" height="16" viewBox="0 0 16 16"><circle cx="6" cy="4" r="3.500" fill="#b6c0cf" /><path d="M0 13q0-5 6-5v5z" fill="#b6c0cf" /><path d="M7 9h4v3H7v3h4M12 9v3h3V9v6" fill="none" stroke="#9fb0c8" strokeWidth="1.300" /></svg>
          <svg width="14" height="14" viewBox="0 0 14 14"><path d="M4 1q3 2 6 0l4 3-2 3-1-1v8H3V6L2 7 0 4z" fill={ime} /></svg>
          <svg width="14" height="14" viewBox="0 0 14 14"><path d="M2 12l6-6" stroke={ime} strokeWidth="3" strokeLinecap="round" /><path d="M13 3q1 4-2 5-4 1-5-2 0-4 4-6L9 3l2 2z" fill={ime} /></svg>
        </ImeBar>
      </TitleBar>

      <MenuBar>
        {menus.map((m) => <MenuBtn key={m} type="button"><Mixed wide>{m}</Mixed></MenuBtn>)}
        <Tools items={[{ i: "change", t: "新建变更", caret: true }, { i: "robot", t: "广小二" }]} />
        <Ticker href="#">自动判断边角柱只需在..</Ticker>
        <Tools items={[{ i: "user", t: "13907298339", caret: true }, { t: "造价豆:0" }, { i: "bell" }]} />
        <More>»</More>
      </MenuBar>

      <BarRow $h={31}>
        <Bar $w={149} $ml={0}>
          <Tools items={[{ i: "new" }, { i: "open", caret: true }, { i: "save" }, { sep: true }, { i: "undo", caret: true }]} />
          <More>»</More>
        </Bar>
        <Bar $w={550} $ml={5}>
          <Tools items={[{ i: "define", t: "定义" }, { i: "sum", t: "汇总计算" }, { i: "cloud", t: "云检查" }, { i: "align", t: "平齐板顶", off: true }, { i: "find", t: "查找图元" }, { i: "glasses", t: "查看钢筋量" }, { i: "batch", t: "批量选择", off: true }]} />
          <More>»</More>
        </Bar>
        <Bar $grow>
          <Tools items={[{ i: "cube", t: "三维", white: true, caret: true }, { i: "top", t: "俯视", caret: true }, { i: "orbit", t: "动态观察", on: true }, { i: "local", t: "局部三维", off: true }, { sep: true }, { i: "full", t: "全屏" }, { i: "zoom", t: "缩放", caret: true }, { i: "pan", t: "平移", caret: true }, { i: "spin", t: "屏幕旋转", caret: "tight" }, { sep: true }, { i: "floors", t: "选择楼层" }]} />
          <More>»</More>
        </Bar>
      </BarRow>

      <Body>
        <SidePanel />
        <Main>
          <BarRow>
            <Bar><Grip /><Tools items={edit} /></Bar>
          </BarRow>
          <BarRow>
            <Bar>
              <Grip $w={8} />
              <Combo label="楼层" value="基础层" w={57} />
              <Combo label="构件类型" value="基础" w={69} />
              <Combo label="构件" value="筏板主筋" w={69} />
              <Combo label="名称" value="FBZJ-1" w={69} />
              <Tools items={[{ sep: true }, { i: "prop", t: "属性" }, { i: "edit", t: "编辑钢筋", on: true }, { i: "list", t: "构件列表" }, { i: "pick", t: "拾取构件" }]} />
            </Bar>
            <Bar $ml={74}>
              <Grip $w={8} />
              <Tools items={[{ i: "twoPoint", t: "两点" }, { i: "parallel", t: "平行" }, { i: "pointAngle", t: "点角", caret: true }, { i: "arcAxis", t: "三点辅轴", caret: true }, { i: "delAxis", t: "删除辅轴" }, { i: "dim", t: "长度标注", caret: true }]} />
            </Bar>
          </BarRow>
          <BarRow>
            <Bar $grow>
              <Grip />
              <Tools items={[{ i: "cursor", t: "选择", caret: true }, { sep: true }, { i: "line", t: "直线", off: true }, { i: "arc", t: "三点画弧", off: true, caret: true }]} />
              <DrawBox><select aria-label="弧参数" /><Caret color="#838383" /></DrawBox>
              <Tools items={[{ i: "rect", t: "矩形", off: true }, { sep: true }, { i: "board", t: "单板" }, { i: "boards", t: "多板" }, { i: "custom", t: "自定义", caret: "tight" }, { i: "horiz", t: "水平" }, { i: "vert", t: "垂直" }, { i: "xy", t: "XY方向", on: true, deep: true }, { i: "para", t: "平行边布置受力筋", caret: true }, { t: "放射筋", caret: true }, { i: "auto", t: "自动配筋" }, { sep: true }, { i: "swap", t: "交换左右标注" }]} />
              <More>»</More>
            </Bar>
            <Bar $w={34}><Grip /></Bar>
          </BarRow>

          <Viewport>
            <Model />
            <Palette>
              <h2>钢筋显示控制面板</h2>
              <PaletteList>
                <Check label="底筋" />
                <Check label="显示其它图元" />
                <Check label="显示详细公式" />
              </PaletteList>
            </Palette>
          </Viewport>

          <BarRow $h={34}>
            <Bar><Grip $w={8} /><Tools items={[{ i: "ortho", t: "正交" }, { i: "snap", t: "对象捕捉", on: true }, { i: "dyn", t: "动态输入" }]} /></Bar>
            <Bar><Grip $w={8} /><Tools items={[{ i: "cross", t: "交点" }, { i: "perp", t: "垂点", on: true }, { i: "mid", t: "中点", on: true }, { i: "vertex", t: "顶点" }, { i: "coord", t: "坐标" }]} /></Bar>
            <Bar>
              <Grip $w={8} />
              <Combo label="偏移方式" value="不偏移" w={58} />
              <Sep />
              <Field>X=<Spin w={58} value="0" label="X" />mm</Field>
              <Field>Y=<Spin w={58} value="0" label="Y" />mm</Field>
              <Sep />
              <Field htmlFor="rotate"><Tick id="rotate" type="checkbox" aria-label="旋转" /></Field>
              旋转
              <Field>&nbsp;<Spin w={68} value="0.000" label="角度" />°</Field>
            </Bar>
          </BarRow>

          <TablePane>
            <Splitter>
              <button type="button" aria-label="关闭表格">
                <svg width="11" height="11" viewBox="0 0 11 11"><rect x="0.500" y="0.500" width="10" height="10" fill="#e8dede" stroke="#333" /><path d="M2 2l7 7M9 2L2 9" stroke="#222" strokeWidth="1.500" /></svg>
              </button>
            </Splitter>
            <PaneCol>
              <BarRow $h={26}>
                <Bar $grow>
                  <Tools items={[{ i: "first", nav: true }, { i: "prev", nav: true }, { i: "next", nav: true }, { i: "last", nav: true }, { sep: true }, { i: "up" }, { i: "down", off: true }, { sep: true }, { i: "insert", t: "插入", off: true }, { i: "remove", t: "删除", off: true }, { i: "scale", t: "缩尺配筋" }, { i: "info", t: "钢筋信息" }, { i: "gallery", t: "钢筋图库" }, { i: "other", t: "其他", caret: "tight" }, { t: "关闭" }, { sep: true }]} />
                  <Total>单构件钢筋总重(kg)：37.229</Total>
                </Bar>
              </BarRow>
              <GridFrame>
                <Grid>
                  <colgroup>
                    {widths.map((w, i) => <col key={i} width={w} />)}
                    <col />
                  </colgroup>
                  <thead>
                    <tr>{heads.map((h, i) => <th key={i} scope="col"><Mixed>{h}</Mixed></th>)}</tr>
                  </thead>
                  <tbody>
                    {rows.map((r, i) => (
                      <Row key={i} $kind={i === 3 ? "empty" : i === 2 ? "current" : "data"}>
                        <th scope="row"><Mixed>{r[0]}</Mixed></th>
                        {r.slice(1).map((c, k) => <Cell key={k} col={k + 1} text={c} />)}
                      </Row>
                    ))}
                  </tbody>
                </Grid>
                <HScroll>
                  <Chevron dir="left" />
                  <HThumb /><HRest />
                  <Chevron dir="right" />
                </HScroll>
              </GridFrame>
            </PaneCol>
          </TablePane>
        </Main>
      </Body>

      <Status>
        <StatusCell $w={148}><Mixed>X=8742 Y=5498</Mixed></StatusCell>
        <StatusCell $w={77}><Mixed>层高:1.5m</Mixed></StatusCell>
        <StatusCell $w={97}><Mixed>底标高:-1.55m</Mixed></StatusCell>
        <StatusCell $w={47}><Mixed>2(4)</Mixed></StatusCell>
        <StatusCell />
        <StatusCell $w={70}><Mixed>183.5 FPS</Mixed></StatusCell>
      </Status>

      <TaskBar>
        <Start type="button" aria-label="开始">
          <svg width="16" height="16" viewBox="0 0 16 16"><path d="M0 2.300L6.500 1.400v6.200H0zM7.500 1.300L16 0v7.500H7.500zM0 8.500h6.500v6.200L0 13.800zM7.500 8.500H16V16l-8.500-1.200z" fill="#fff" /></svg>
        </Start>
        <Search>
          <svg width="22" height="22" viewBox="0 0 22 22"><circle cx="11" cy="11" r="9" fill="none" stroke="#fff" strokeWidth="3" /></svg>
          <input placeholder="在这里输入你要搜索的内容" aria-label="搜索" />
          <svg width="16" height="18" viewBox="0 0 16 18"><rect x="5.500" y="1.500" width="5" height="9" rx="2" fill="none" stroke="#aaa" /><path d="M3.500 8q0 5 4.500 5t4.500-5M8 13v4M5 16.500h6" fill="none" stroke="#aaa" /></svg>
        </Search>
        {taskIcons.map((t) => (
          <TaskBtn key={t.label} type="button" aria-label={t.label} $run={t.run} $active={t.active}><TaskArt>{t.art}</TaskArt></TaskBtn>
        ))}
        <Tray>
          链接
          <svg width="16" height="16" viewBox="0 0 16 16"><path d="M2.500 10.500L8 5l5.500 5.500" fill="none" stroke="#fff" strokeWidth="1.300" /></svg>
          <svg width="16" height="16" viewBox="0 0 16 16"><circle cx="8" cy="10" r="6" fill="#c81414" /><path d="M8 5V0M5 3l3 2 3-2" stroke="#c9a040" strokeWidth="1.500" fill="none" /><circle cx="6" cy="8" r="1.500" fill="#f08080" /></svg>
          <svg width="16" height="16" viewBox="0 0 16 16"><path d="M4.500 5.500h10v7h-10zM15.500 7.500v3M2.500 1v3M0.500 4h4v2q0 2-2 2zM2.500 8v5" fill="none" stroke="#fff" /><path d="M6 7h7v4H6z" fill="#fff" /></svg>
          <svg width="16" height="16" viewBox="0 0 16 16"><path d="M2 14Q3 4 14 3M5 14q1-7 9-8M8 14q1-4 6-5M11 14q1-2 3-2" fill="none" stroke="#ddd" /><circle cx="13" cy="14" r="1" fill="#fff" /></svg>
          <svg width="16" height="16" viewBox="0 0 16 16"><path d="M1 6h3l3-3v10l-3-3H1zM9 6q1 2 0 4M11 4q2 4 0 8M13.500 3q2.500 5 0 10" fill="none" stroke="#fff" /></svg>
          <svg width="24" height="14" viewBox="0 0 24 14"><rect x="0.500" y="1.500" width="22" height="11" fill="none" stroke="#fff" /><path d="M3 4.500h17M3 7h17" stroke="#fff" strokeDasharray="2 1" /><path d="M3 10h17" stroke="#fff" /></svg>
          <svg width="18" height="14" viewBox="0 0 18 14"><path d="M3 13L8.500 1h1L15 13M5 9h8" fill="none" stroke="#fff" strokeWidth="1.800" /></svg>
          <svg width="20" height="18" viewBox="0 0 20 18"><path d="M3 4l13-3 2 12-12 4q-3-6-3-13z" fill="#ee4a1c" /><path d="M14 5q-4-2-6 1 0 2 3 2 4 0 3 3-3 3-7 2" fill="none" stroke="#fff" strokeWidth="2" /></svg>
          <Clock>18:01<br />2018/7/16</Clock>
        </Tray>
        <Action type="button" aria-label="通知">
          <svg width="26" height="28" viewBox="0 0 26 28">
            <path d="M5 5h15v12h-9l-3 3v-3H5z" fill="#fff" />
            <path d="M8 8.500h9M8 11.500h9M8 14.500h6" stroke="#000" />
            <circle cx="17" cy="19" r="7" fill="#2b2b2b" stroke="#777" />
            <text x="17" y="23" textAnchor="middle" fill="#fff" fontSize="11" fontFamily="Open Sans">1</text>
          </svg>
        </Action>
      </TaskBar>
    </Shell>
  );
}
